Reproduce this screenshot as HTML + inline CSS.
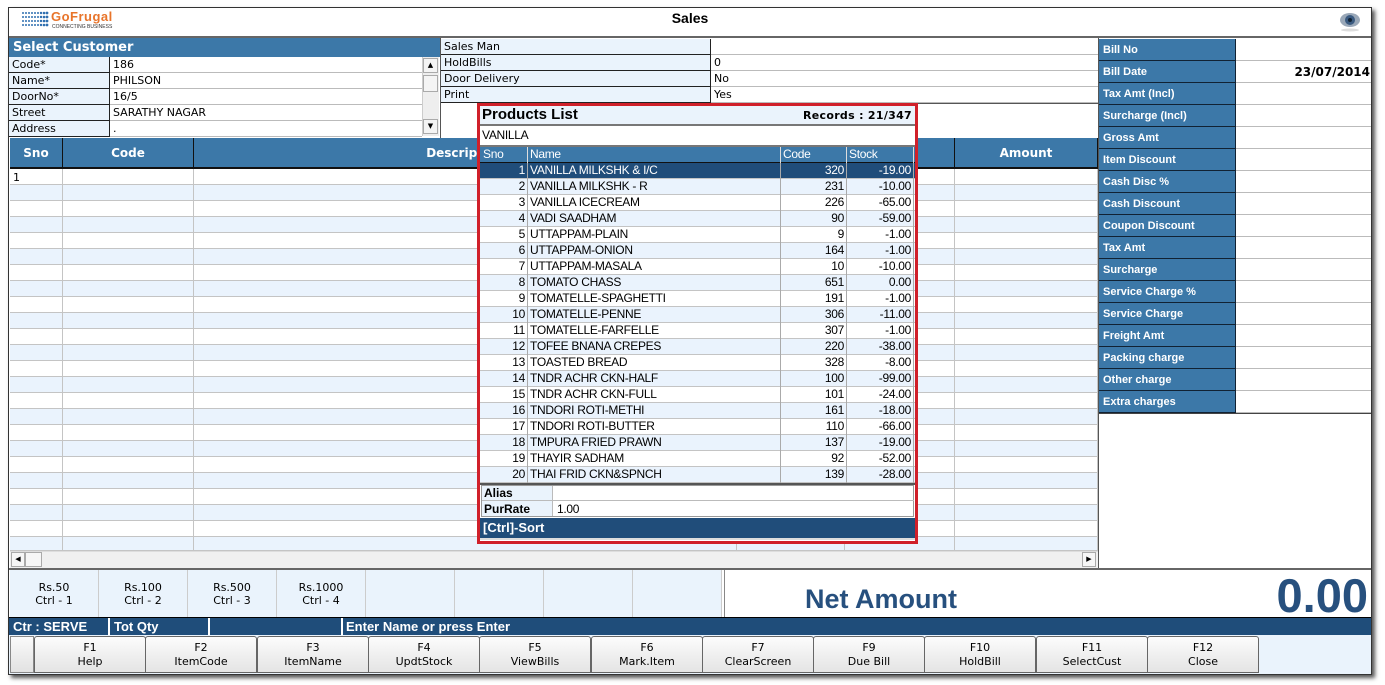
<!DOCTYPE html>
<html><head><meta charset="utf-8">
<style>
*{margin:0;padding:0;box-sizing:border-box}
body{width:1385px;height:685px;background:#fff;position:relative;overflow:hidden;font-family:"DejaVu Sans","Liberation Sans",sans-serif;font-size:11px;color:#000}
.a{position:absolute}
.frame{left:8px;top:7px;width:1364px;height:668px;border:1px solid #333;background:#fff;box-shadow:3px 3px 4px #555}
.blue{background:#3c78a8;color:#fff;font-weight:bold}
.lb{background:#eaf3fc}
.nar{font-family:"Liberation Sans",sans-serif;font-size:12px;letter-spacing:-0.3px}
.cell{position:absolute;overflow:hidden;white-space:nowrap}
</style></head><body>
<div class="a frame"></div>
<div class="a" style="left:9px;top:8px;width:1362px;height:30px;background:#fff;border-bottom:2px solid #666"></div>
<svg class="a" style="left:21px;top:11px" width="30" height="16">
<g fill="#2f6fb0">
<circle cx="2" cy="2" r="1"/><circle cx="5" cy="2" r="1"/><circle cx="8" cy="2" r="1"/><circle cx="11" cy="2" r="1"/><circle cx="14" cy="2" r="1"/><circle cx="17" cy="2" r="1"/><circle cx="20" cy="2" r="1.2"/><circle cx="23" cy="2" r="1.3"/><circle cx="26" cy="2" r="1.4"/>
<circle cx="2" cy="6" r="1"/><circle cx="5" cy="6" r="1"/><circle cx="8" cy="6" r="1"/><circle cx="11" cy="6" r="1"/><circle cx="14" cy="6" r="1"/><circle cx="17" cy="6" r="1"/><circle cx="20" cy="6" r="1.2"/><circle cx="23" cy="6" r="1.3"/><circle cx="26" cy="6" r="1.4"/>
<circle cx="2" cy="10" r="1"/><circle cx="5" cy="10" r="1"/><circle cx="8" cy="10" r="1"/><circle cx="11" cy="10" r="1"/><circle cx="14" cy="10" r="1"/><circle cx="17" cy="10" r="1"/><circle cx="20" cy="10" r="1.2"/><circle cx="23" cy="10" r="1.3"/><circle cx="26" cy="10" r="1.4"/>
<circle cx="2" cy="14" r="1"/><circle cx="5" cy="14" r="1"/><circle cx="8" cy="14" r="1"/><circle cx="11" cy="14" r="1"/><circle cx="14" cy="14" r="1"/><circle cx="17" cy="14" r="1"/><circle cx="20" cy="14" r="1.2"/><circle cx="23" cy="14" r="1.3"/><circle cx="26" cy="14" r="1.4"/>
</g></svg>
<div class="a" style="left:51px;top:9px;font:bold 13px 'Liberation Sans',sans-serif;color:#e8742a;letter-spacing:0.5px">GoFrugal</div>
<div class="a" style="left:52px;top:24px;font:5px 'Liberation Sans',sans-serif;color:#333">CONNECTING BUSINESS</div>
<div class="a" style="left:640px;top:10px;width:100px;text-align:center;font:bold 14px 'Liberation Sans',sans-serif">Sales</div>
<svg class="a" style="left:1338px;top:11px" width="24" height="22"><ellipse cx="12" cy="9" rx="10" ry="7" fill="#9aa8b8"/><circle cx="12" cy="9" r="5" fill="#3a5a80"/><circle cx="12" cy="9" r="2" fill="#123"/><ellipse cx="12" cy="19" rx="9" ry="1.5" fill="#ddd"/></svg>

<div class="a blue" style="left:9px;top:38px;width:431px;height:19px;font-size:13px;padding:2px 4px">Select Customer</div>
<div id="cust"></div>
<div class="a" style="left:422px;top:57px;width:17px;height:79px;background:#eee;border-left:1px solid #ccc"></div>
<div class="a" style="left:423px;top:58px;width:15px;height:15px;background:#f4f4f4;border:1px solid #aaa;font-size:7px;text-align:center;line-height:13px">▲</div>
<div class="a" style="left:423px;top:75px;width:15px;height:17px;background:#f4f4f4;border:1px solid #aaa"></div>
<div class="a" style="left:423px;top:119px;width:15px;height:15px;background:#f4f4f4;border:1px solid #aaa;font-size:7px;text-align:center;line-height:13px">▼</div>
<div id="mid"></div>
<div id="rp"></div>
<div class="a" style="left:1098px;top:38px;width:1px;height:532px;background:#555"></div>
<div id="grid"></div>
<div class="a" style="left:10px;top:551px;width:1088px;height:17px;background:#f0f0f0;border-top:1px solid #ddd"></div>
<div class="a" style="left:11px;top:552px;width:14px;height:15px;background:#f6f6f6;border:1px solid #aaa;font-size:7px;line-height:13px;text-align:center">◀</div>
<div class="a" style="left:25px;top:552px;width:17px;height:15px;background:#f6f6f6;border:1px solid #aaa"></div>
<div class="a" style="left:1082px;top:552px;width:14px;height:15px;background:#f6f6f6;border:1px solid #aaa;font-size:7px;line-height:13px;text-align:center">▶</div>
<div class="a" style="left:9px;top:568px;width:1362px;height:2px;background:#666"></div>
<div id="den"></div>
<div class="a" style="left:724px;top:570px;width:647px;height:47px;background:#fff;border-left:1px solid #888"></div>
<div class="a" style="left:805px;top:584px;font:bold 27px 'Liberation Sans',sans-serif;color:#27507e">Net Amount</div>
<div class="a" style="left:1200px;top:568px;width:1168px;width:168px;text-align:right;font:bold 47px 'Liberation Sans',sans-serif;color:#27507e">0.00</div>
<div class="a" style="left:9px;top:617px;width:1362px;height:18px;background:#1f4d7a;border-top:1px solid #000"></div>
<div class="a" style="left:108px;top:618px;width:2px;height:17px;background:#fff"></div>
<div class="a" style="left:208px;top:618px;width:2px;height:17px;background:#fff"></div>
<div class="a" style="left:341px;top:618px;width:2px;height:17px;background:#fff"></div>
<div class="a" style="left:13px;top:619px;color:#fff;font:bold 13px 'Liberation Sans',sans-serif">Ctr : SERVE</div>
<div class="a" style="left:114px;top:619px;color:#fff;font:bold 13px 'Liberation Sans',sans-serif">Tot Qty</div>
<div class="a" style="left:346px;top:619px;color:#fff;font:bold 13px 'Liberation Sans',sans-serif">Enter Name or press Enter</div>
<div id="fk"></div>

<div class="a" style="left:477px;top:103px;width:441px;height:441px;border:3px solid #d0202a;background:#fff"></div>
<div class="a lb" style="left:480px;top:106px;width:435px;height:20px;border-bottom:2px solid #777"></div>
<div class="a" style="left:482px;top:106px;font:bold 15px 'Liberation Sans',sans-serif">Products List</div>
<div class="a" style="left:760px;top:109px;width:152px;text-align:right;font:bold 11px 'DejaVu Sans',sans-serif;letter-spacing:0.3px">Records : 21/347</div>
<div class="a nar" style="left:482px;top:128px">VANILLA</div>
<div class="a" style="left:480px;top:145px;width:435px;height:2px;background:#777"></div>
<div id="pl"></div>
<div class="a" style="left:480px;top:483px;width:435px;height:2px;background:#555"></div>
<div class="a" style="left:481px;top:485px;width:433px;height:32px;border:1px solid #999;background:#fff"></div>
<div class="a lb" style="left:482px;top:486px;width:71px;height:30px;border-right:1px solid #bbb"></div>
<div class="a" style="left:482px;top:500px;width:432px;height:1px;background:#bbb"></div>
<div class="a" style="left:484px;top:486px;font:bold 12px 'Liberation Sans',sans-serif">Alias</div>
<div class="a" style="left:484px;top:502px;font:bold 12px 'Liberation Sans',sans-serif">PurRate</div>
<div class="a nar" style="left:557px;top:502px">1.00</div>
<div class="a" style="left:480px;top:518px;width:435px;height:22px;background:#204d7a;border-bottom:2px solid #ddd;color:#fff;font:bold 13px 'Liberation Sans',sans-serif;padding:2px 3px">[Ctrl]-Sort</div>

<script>
function h(id,s){document.getElementById(id).innerHTML=s}
var s='';
var cl=[["Code*","186"],["Name*","PHILSON"],["DoorNo*","16/5"],["Street","SARATHY NAGAR"],["Address","."]];
cl.forEach(function(r,i){var y=57+i*16;
s+='<div class="cell lb" style="left:9px;top:'+y+'px;width:101px;height:16px;border-bottom:1px solid #222;border-right:1px solid #222;padding:1px 0 0 3px">'+r[0]+'</div>';
s+='<div class="cell" style="left:110px;top:'+y+'px;width:312px;height:16px;border-bottom:1px solid #bbb;padding:1px 0 0 3px">'+r[1]+'</div>';});
h('cust',s);
s='';
var ml=[["Sales Man",""],["HoldBills","0"],["Door Delivery","No"],["Print","Yes"]];
ml.forEach(function(r,i){var y=39+i*16;
s+='<div class="cell lb" style="left:441px;top:'+y+'px;width:270px;height:16px;border-bottom:1px solid #222;border-right:1px solid #222;padding:1px 0 0 3px">'+r[0]+'</div>';
s+='<div class="cell" style="left:711px;top:'+y+'px;width:387px;height:16px;border-bottom:1px solid #bbb;padding:1px 0 0 3px">'+r[1]+'</div>';});
s+='<div class="a" style="left:440px;top:38px;width:1px;height:100px;background:#555"></div>';
s+='<div class="a" style="left:711px;top:103px;width:387px;height:1px;background:#555"></div>';
h('mid',s);
s='';
var rl=["Bill No","Bill Date","Tax Amt (Incl)","Surcharge (Incl)","Gross Amt","Item Discount","Cash Disc %","Cash Discount","Coupon Discount","Tax Amt","Surcharge","Service Charge %","Service Charge","Freight Amt","Packing charge","Other charge","Extra charges"];
rl.forEach(function(r,i){var y=39+i*22;
s+='<div class="cell blue" style="left:1099px;top:'+y+'px;width:137px;height:22px;border-bottom:1px solid #123;border-right:1px solid #123;padding:5px 4px 0;font-family:\'Liberation Sans\',sans-serif;font-size:11px">'+r+'</div>';
s+='<div class="cell" style="left:1236px;top:'+y+'px;width:135px;height:22px;border-bottom:1px solid #bbb;text-align:right;padding:4px 1px 0;font-weight:bold;font-size:12px">'+(i==1?'23/07/2014':'')+'</div>';});
s+='<div class="a" style="left:1099px;top:413px;width:272px;height:1px;background:#444"></div>';
h('rp',s);
s='';
var gc=[[10,63,"Sno"],[63,194,"Code"],[194,737,"Description"],[737,845,""],[845,955,""],[955,1098,"Amount"]];
s+='<div class="a blue" style="left:10px;top:138px;width:1088px;height:31px;border-bottom:2px solid #111"></div>';
gc.forEach(function(c){s+='<div class="cell" style="left:'+c[0]+'px;top:138px;width:'+(c[1]-c[0])+'px;height:30px;border-right:1px solid #111;color:#fff;font-weight:bold;font-size:12px;text-align:center;line-height:30px">'+c[2]+'</div>';});
for(var i=0;i<24;i++){var y=169+i*16;var hh=Math.min(16,551-y);if(hh<=0)break;
s+='<div class="a" style="left:10px;top:'+y+'px;width:1088px;height:'+hh+'px;background:'+(i%2?'#eaf3fd':'#fff')+';border-bottom:1px solid #c4c4c4"></div>';}
gc.forEach(function(c){s+='<div class="a" style="left:'+(c[1]-1)+'px;top:169px;width:1px;height:382px;background:#c4c4c4"></div>';});
s+='<div class="a" style="left:13px;top:171px">1</div>';
h('grid',s);
s='';
var dn=[["Rs.50","Ctrl - 1"],["Rs.100","Ctrl - 2"],["Rs.500","Ctrl - 3"],["Rs.1000","Ctrl - 4"],["",""],["",""],["",""],["",""]];
dn.forEach(function(d,i){var x=10+i*89;
s+='<div class="cell lb" style="left:'+x+'px;top:570px;width:89px;height:47px;border-right:1px solid #ccc;text-align:center;padding-top:11px;line-height:13px">'+d[0]+'<br>'+d[1]+'</div>';});
h('den',s);
s='<div class="a lb" style="left:9px;top:635px;width:1362px;height:39px"></div>';
s+='<div class="a" style="left:10px;top:636px;width:24px;height:37px;border:1px solid #888;background:linear-gradient(#fafafa,#e2e2e2)"></div>';
var fk=[["F1","Help"],["F2","ItemCode"],["F3","ItemName"],["F4","UpdtStock"],["F5","ViewBills"],["F6","Mark.Item"],["F7","ClearScreen"],["F9","Due Bill"],["F10","HoldBill"],["F11","SelectCust"],["F12","Close"]];
fk.forEach(function(f,i){var x=Math.round(34+i*111.3);
s+='<div class="cell" style="left:'+x+'px;top:636px;width:112px;height:37px;border:1px solid #666;border-radius:3px 3px 0 0;background:linear-gradient(#fcfcfc,#e4e4e4);text-align:center;padding-top:4px;line-height:14px">'+f[0]+'<br>'+f[1]+'</div>';});
h('fk',s);
s='';
var pr=[["VANILLA MILKSHK & I/C",320,"-19.00"],["VANILLA MILKSHK - R",231,"-10.00"],["VANILLA ICECREAM",226,"-65.00"],["VADI SAADHAM",90,"-59.00"],["UTTAPPAM-PLAIN",9,"-1.00"],["UTTAPPAM-ONION",164,"-1.00"],["UTTAPPAM-MASALA",10,"-10.00"],["TOMATO CHASS",651,"0.00"],["TOMATELLE-SPAGHETTI",191,"-1.00"],["TOMATELLE-PENNE",306,"-11.00"],["TOMATELLE-FARFELLE",307,"-1.00"],["TOFEE BNANA CREPES",220,"-38.00"],["TOASTED BREAD",328,"-8.00"],["TNDR ACHR CKN-HALF",100,"-99.00"],["TNDR ACHR CKN-FULL",101,"-24.00"],["TNDORI ROTI-METHI",161,"-18.00"],["TNDORI ROTI-BUTTER",110,"-66.00"],["TMPURA FRIED PRAWN",137,"-19.00"],["THAYIR SADHAM",92,"-52.00"],["THAI FRID CKN&SPNCH",139,"-28.00"]];
var pc=[481,528,781,847,914];
s+='<div class="a" style="left:480px;top:147px;width:435px;height:16px;background:#3c78a8;border-bottom:1px solid #111"></div>';
["Sno","Name","Code","Stock"].forEach(function(t,j){s+='<div class="cell nar" style="left:'+pc[j]+'px;top:147px;width:'+(pc[j+1]-pc[j])+'px;height:16px;color:#fff;padding-left:2px;border-right:1px solid #ddd">'+t+'</div>';});
pr.forEach(function(r,i){var y=163+i*16;var sel=i==0;
var bg=sel?'#204d7a':(i%2?'#eaf3fd':'#fff');var col=sel?'#fff':'#000';
s+='<div class="a" style="left:480px;top:'+y+'px;width:435px;height:16px;background:'+bg+';border-bottom:1px solid #c4c4c4"></div>';
var v=[i+1,r[0],r[1],r[2]];
v.forEach(function(t,j){s+='<div class="cell nar" style="left:'+pc[j]+'px;top:'+y+'px;width:'+(pc[j+1]-pc[j])+'px;height:16px;color:'+col+';padding:0 2px;border-right:1px solid #aaa;text-align:'+(j==1?'left':'right')+'">'+t+'</div>';});});
h('pl',s);
</script>
</body></html>
